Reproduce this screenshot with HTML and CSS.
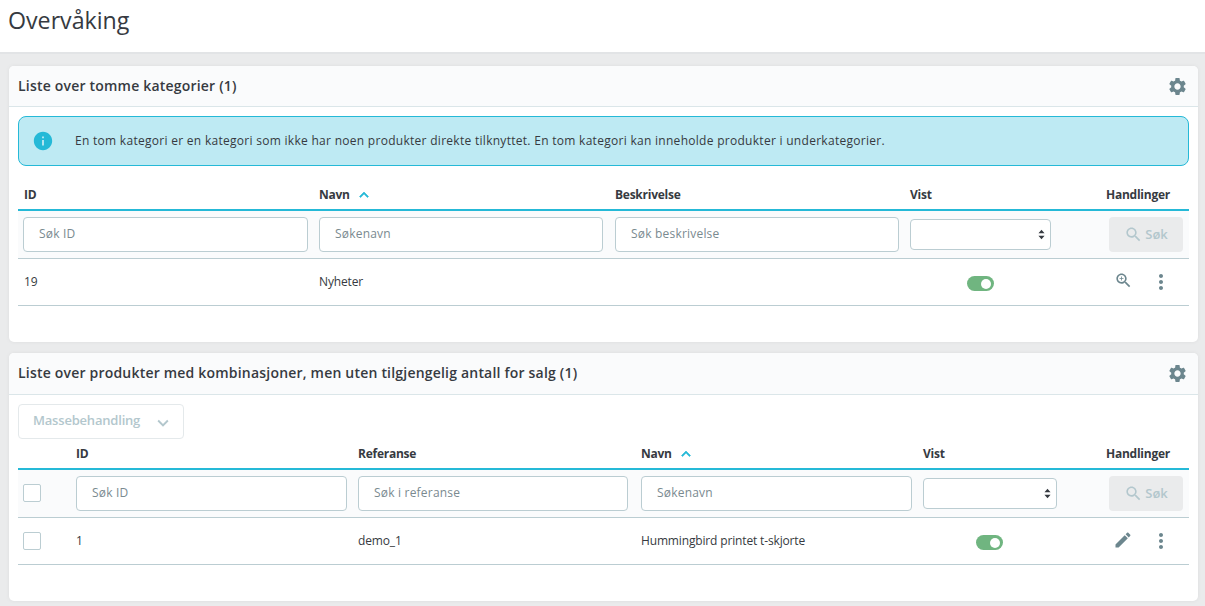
FILE: index.html
```html
<!DOCTYPE html>
<html lang="no">
<head>
    <meta charset="UTF-8">
    <meta name="viewport" content="width=device-width, initial-scale=1.0">
    <title>Overvåking</title>
    <link rel="stylesheet" href="styles.css">
</head>
<body>
    <header class="page-head">
        <h1>Overvåking</h1>
    </header>

    <main class="content">
        <section class="card">
            <div class="card-head">
                <h3>Liste over tomme kategorier (1)</h3>
                <svg class="gear" viewBox="0 0 24 24"><path d="M19.14 12.94c.04-.3.06-.61.06-.94 0-.32-.02-.64-.07-.94l2.03-1.58c.18-.14.23-.41.12-.61l-1.92-3.32c-.12-.22-.37-.29-.59-.22l-2.39.96c-.5-.38-1.03-.7-1.62-.94l-.36-2.54c-.04-.24-.24-.41-.48-.41h-3.84c-.24 0-.43.17-.47.41l-.36 2.54c-.59.24-1.13.57-1.62.94l-2.39-.96c-.22-.08-.47 0-.59.22L2.74 8.87c-.12.21-.08.47.12.61l2.03 1.58c-.05.3-.09.63-.09.94s.02.64.07.94l-2.03 1.58c-.18.14-.23.41-.12.61l1.92 3.32c.12.22.37.29.59.22l2.39-.96c.5.38 1.03.7 1.62.94l.36 2.54c.05.24.24.41.48.41h3.84c.24 0 .44-.17.47-.41l.36-2.54c.59-.24 1.13-.56 1.62-.94l2.39.96c.22.08.47 0 .59-.22l1.92-3.32c.12-.22.07-.47-.12-.61l-2.01-1.58zM12 15.6c-1.98 0-3.6-1.62-3.6-3.6s1.62-3.6 3.6-3.6 3.6 1.62 3.6 3.6-1.62 3.6-3.6 3.6z"/></svg>
            </div>
            <div class="card-body">
                <div class="alert">
                    <svg class="alert-icon" viewBox="0 0 24 24"><path d="M12 2C6.48 2 2 6.48 2 12s4.48 10 10 10 10-4.48 10-10S17.52 2 12 2zm1 15h-2v-6h2v6zm0-8h-2V7h2v2z"/></svg>
                    <p>En tom kategori er en kategori som ikke har noen produkter direkte tilknyttet. En tom kategori kan inneholde produkter i underkategorier.</p>
                </div>
                <table class="grid grid-categories">
                    <colgroup>
                        <col class="c-a"><col class="c-b"><col class="c-c"><col class="c-d"><col>
                    </colgroup>
                    <thead>
                        <tr class="titles">
                            <th>ID</th>
                            <th>Navn <svg class="sort" viewBox="0 0 24 24"><path d="M7.41 15.41L12 10.83l4.59 4.58L18 14l-6-6-6 6z"/></svg></th>
                            <th>Beskrivelse</th>
                            <th>Vist</th>
                            <th class="right">Handlinger</th>
                        </tr>
                        <tr class="filters">
                            <td><input type="text" placeholder="Søk ID"></td>
                            <td class="name-filter"><input type="text" placeholder="Søkenavn"></td>
                            <td><input type="text" placeholder="Søk beskrivelse"></td>
                            <td><div class="select-wrap"><select></select><svg class="updown" viewBox="0 0 8 12"><path d="M4 0.5L7.5 4.5H0.5zM4 11.5L0.5 7.5H7.5z"/></svg></div></td>
                            <td class="right"><button class="search-btn" disabled><svg viewBox="0 0 24 24"><path d="M15.5 14h-.79l-.28-.27C15.41 12.59 16 11.11 16 9.5 16 5.91 13.09 3 9.5 3S3 5.91 3 9.5 5.91 16 9.5 16c1.61 0 3.09-.59 4.23-1.57l.27.28v.79l5 4.99L20.49 19l-4.99-5zm-6 0C7.01 14 5 11.99 5 9.5S7.01 5 9.5 5 14 7.01 14 9.5 11.99 14 9.5 14z"/></svg>Søk</button></td>
                        </tr>
                    </thead>
                    <tbody>
                        <tr>
                            <td class="cell-text">19</td>
                            <td>Nyheter</td>
                            <td></td>
                            <td class="center"><span class="toggle"><span class="knob"></span></span></td>
                            <td>
                                <div class="actions">
                                    <svg class="act act-zoom" viewBox="0 0 24 24"><path d="M15.5 14h-.79l-.28-.27C15.41 12.59 16 11.11 16 9.5 16 5.91 13.09 3 9.5 3S3 5.91 3 9.5 5.91 16 9.5 16c1.61 0 3.09-.59 4.23-1.57l.27.28v.79l5 4.99L20.49 19l-4.99-5zm-6 0C7.01 14 5 11.99 5 9.5S7.01 5 9.5 5 14 7.01 14 9.5 11.99 14 9.5 14z"/><path d="M12 10h-2v2H9v-2H7V9h2V7h1v2h2v1z"/></svg>
                                    <svg class="act" viewBox="0 0 24 24"><path d="M12 8c1.1 0 2-.9 2-2s-.9-2-2-2-2 .9-2 2 .9 2 2 2zm0 2c-1.1 0-2 .9-2 2s.9 2 2 2 2-.9 2-2-.9-2-2-2zm0 6c-1.1 0-2 .9-2 2s.9 2 2 2 2-.9 2-2-.9-2-2-2z"/></svg>
                                </div>
                            </td>
                        </tr>
                    </tbody>
                </table>
            </div>
        </section>

        <section class="card">
            <div class="card-head head-products">
                <h3>Liste over produkter med kombinasjoner, men uten tilgjengelig antall for salg (1)</h3>
                <svg class="gear" viewBox="0 0 24 24"><path d="M19.14 12.94c.04-.3.06-.61.06-.94 0-.32-.02-.64-.07-.94l2.03-1.58c.18-.14.23-.41.12-.61l-1.92-3.32c-.12-.22-.37-.29-.59-.22l-2.39.96c-.5-.38-1.03-.7-1.62-.94l-.36-2.54c-.04-.24-.24-.41-.48-.41h-3.84c-.24 0-.43.17-.47.41l-.36 2.54c-.59.24-1.13.57-1.62.94l-2.39-.96c-.22-.08-.47 0-.59.22L2.74 8.87c-.12.21-.08.47.12.61l2.03 1.58c-.05.3-.09.63-.09.94s.02.64.07.94l-2.03 1.58c-.18.14-.23.41-.12.61l1.92 3.32c.12.22.37.29.59.22l2.39-.96c.5.38 1.03.7 1.62.94l.36 2.54c.05.24.24.41.48.41h3.84c.24 0 .44-.17.47-.41l.36-2.54c.59-.24 1.13-.56 1.62-.94l2.39.96c.22.08.47 0 .59-.22l1.92-3.32c.12-.22.07-.47-.12-.61l-2.01-1.58zM12 15.6c-1.98 0-3.6-1.62-3.6-3.6s1.62-3.6 3.6-3.6 3.6 1.62 3.6 3.6-1.62 3.6-3.6 3.6z"/></svg>
            </div>
            <div class="card-body body-products">
                <button class="bulk" disabled><span class="bulk-label">Massebehandling</span> <svg viewBox="0 0 24 24"><path d="M16.59 8.59L12 13.17 7.41 8.59 6 10l6 6 6-6z"/></svg></button>
                <table class="grid grid-products">
                    <colgroup>
                        <col class="p-a"><col class="p-b"><col class="p-c"><col class="p-d"><col class="p-e"><col>
                    </colgroup>
                    <thead>
                        <tr class="titles">
                            <th></th>
                            <th>ID</th>
                            <th>Referanse</th>
                            <th>Navn <svg class="sort" viewBox="0 0 24 24"><path d="M7.41 15.41L12 10.83l4.59 4.58L18 14l-6-6-6 6z"/></svg></th>
                            <th>Vist</th>
                            <th class="right">Handlinger</th>
                        </tr>
                        <tr class="filters">
                            <td><span class="check"></span></td>
                            <td><input type="text" placeholder="Søk ID"></td>
                            <td class="ref-filter"><input type="text" placeholder="Søk i referanse"></td>
                            <td><input type="text" placeholder="Søkenavn"></td>
                            <td><div class="select-wrap"><select></select><svg class="updown" viewBox="0 0 8 12"><path d="M4 0.5L7.5 4.5H0.5zM4 11.5L0.5 7.5H7.5z"/></svg></div></td>
                            <td class="right"><button class="search-btn" disabled><svg viewBox="0 0 24 24"><path d="M15.5 14h-.79l-.28-.27C15.41 12.59 16 11.11 16 9.5 16 5.91 13.09 3 9.5 3S3 5.91 3 9.5 5.91 16 9.5 16c1.61 0 3.09-.59 4.23-1.57l.27.28v.79l5 4.99L20.49 19l-4.99-5zm-6 0C7.01 14 5 11.99 5 9.5S7.01 5 9.5 5 14 7.01 14 9.5 11.99 14 9.5 14z"/></svg>Søk</button></td>
                        </tr>
                    </thead>
                    <tbody>
                        <tr>
                            <td><span class="check"></span></td>
                            <td>1</td>
                            <td>demo_1</td>
                            <td>Hummingbird printet t-skjorte</td>
                            <td class="center"><span class="toggle"><span class="knob"></span></span></td>
                            <td>
                                <div class="actions">
                                    <svg class="act act-edit" viewBox="0 0 24 24"><path d="M3 17.25V21h3.75L17.81 9.94l-3.75-3.75L3 17.25zM20.71 7.04c.39-.39.39-1.02 0-1.41l-2.34-2.34c-.39-.39-1.02-.39-1.41 0l-1.83 1.83 3.75 3.75 1.83-1.83z"/></svg>
                                    <svg class="act" viewBox="0 0 24 24"><path d="M12 8c1.1 0 2-.9 2-2s-.9-2-2-2-2 .9-2 2 .9 2 2 2zm0 2c-1.1 0-2 .9-2 2s.9 2 2 2 2-.9 2-2-.9-2-2-2zm0 6c-1.1 0-2 .9-2 2s.9 2 2 2 2-.9 2-2-.9-2-2-2z"/></svg>
                                </div>
                            </td>
                        </tr>
                    </tbody>
                </table>
            </div>
        </section>
    </main>
</body>
</html>
```

FILE: styles.css
```css
* {
    box-sizing: border-box;
}
html, body {
    height: 100%;
}
body {
    margin: 0;
    overflow: hidden;
    background: #eaebec;
    color: #363a41;
    font-family: "Open Sans", sans-serif;
    font-size: 12px;
}
.page-head {
    height: 54px;
    padding: 4px 8px 0;
    background: #fff;
    border-bottom: 2px solid #e2e4e6;
}
.page-head h1 {
    margin: 0;
    font-size: 23.2px;
    font-weight: 400;
    line-height: 33px;
}
.content {
    display: flex;
    flex-direction: column;
    gap: 11px;
    padding: 12px 7px 0 9px;
}
.card {
    background: #fff;
    border-radius: 5px;
    box-shadow: 0 0 4px rgba(0, 0, 0, 0.06);
}
.card-head {
    display: flex;
    align-items: center;
    justify-content: space-between;
    height: 41px;
    padding: 0 10px 0 9px;
    background: #fafbfc;
    border-bottom: 1px solid #dbe6e9;
    border-radius: 5px 5px 0 0;
}
.head-products {
    height: 42px;
}
.card-head h3 {
    margin: 0;
    padding-bottom: 2px;
    font-size: 14px;
    font-weight: 600;
    letter-spacing: 0.2px;
}
.gear {
    width: 21px;
    height: 21px;
    fill: #6c868e;
}
.card-body {
    height: 235px;
    padding: 9px 9px 0;
}
.body-products {
    height: 206px;
}
.alert {
    display: flex;
    align-items: center;
    gap: 12px;
    height: 50px;
    padding: 0 15px 0 13px;
    background: #beeaf3;
    border: 1px solid #25b9d7;
    border-radius: 8px;
}
.alert p {
    margin: 0;
    padding-bottom: 1px;
    font-size: 12px;
    letter-spacing: 0.285px;
}
.alert-icon {
    width: 22px;
    height: 22px;
    margin-right: 9px;
    fill: #25b9d7;
}
.grid {
    width: 100%;
    table-layout: fixed;
    border-collapse: collapse;
}
.grid-categories {
    margin-top: 14px;
}
.c-a, .c-b {
    width: 296px;
}
.c-c {
    width: 295px;
}
.c-d {
    width: 152px;
}
.p-a {
    width: 53px;
}
.p-b {
    width: 282px;
}
.p-c {
    width: 283px;
}
.p-d {
    width: 282px;
}
.p-e {
    width: 145px;
}
.titles th {
    height: 30px;
    padding: 0 5px;
    text-align: left;
    font-size: 12px;
    font-weight: 700;
    letter-spacing: -0.25px;
    vertical-align: middle;
    border-bottom: 2px solid #25b9d7;
}
.grid-categories .titles th:first-child,
.grid tbody td.cell-text {
    padding-left: 6px;
}
.titles th.right {
    padding-right: 19px;
    text-align: right;
}
.sort {
    width: 18px;
    height: 18px;
    margin: -5px 0 -5px 2px;
    vertical-align: 0;
    fill: #25b9d7;
    stroke: #25b9d7;
    stroke-width: 0.8;
}
.filters td {
    height: 48px;
    padding: 0 6px 0 5px;
    background: #fafbfc;
    border-bottom: 1px solid #bbcdd2;
}
.filters td.name-filter {
    padding-right: 7px;
}
.filters td.ref-filter {
    padding-right: 8px;
}
.filters input {
    display: block;
    width: 100%;
    height: 35px;
    padding: 0 15px 2px;
    background: #fff;
    border: 1px solid #bbcdd2;
    border-radius: 4px;
    font-family: inherit;
    font-size: 12px;
    letter-spacing: 0.2px;
    color: #363a41;
}
.filters input::placeholder {
    color: #7a8a90;
    opacity: 1;
}
.select-wrap {
    position: relative;
}
.select-wrap select {
    display: block;
    width: 100%;
    height: 31px;
    background: #fff;
    border: 1px solid #bbcdd2;
    border-radius: 4px;
    appearance: none;
}
.updown {
    position: absolute;
    top: 10px;
    right: 6px;
    width: 7px;
    height: 11px;
    fill: #363a41;
    pointer-events: none;
}
.right {
    text-align: right;
}
.center {
    text-align: center;
}
.search-btn {
    display: inline-flex;
    align-items: center;
    justify-content: center;
    gap: 2px;
    width: 74px;
    height: 35px;
    padding: 0;
    background: #eaebec;
    border: 0;
    border-radius: 4px;
    color: #b3c7cd;
    font-family: inherit;
    font-size: 13px;
    font-weight: 600;
}
.search-btn svg {
    width: 19px;
    height: 19px;
    fill: #b3c7cd;
}
.grid tbody td {
    height: 47px;
    padding: 0 5px;
    letter-spacing: -0.15px;
    border-bottom: 1px solid #bbcdd2;
}
.grid-categories tbody td.center {
    padding-right: 6px;
}
.grid-products tbody td.center {
    padding-right: 7px;
}
.toggle {
    display: inline-flex;
    align-items: center;
    justify-content: flex-end;
    width: 27px;
    height: 15px;
    padding: 0 3px;
    vertical-align: -4px;
    background: #70b580;
    border-radius: 8px;
}
.knob {
    width: 10px;
    height: 10px;
    background: #fff;
    border-radius: 50%;
}
.actions {
    display: flex;
    justify-content: flex-end;
    align-items: center;
    gap: 16px;
    padding-right: 11px;
}
.act {
    width: 24px;
    height: 24px;
    fill: #6c868e;
}
.act-zoom {
    width: 19px;
    height: 19px;
    margin-top: -2px;
}
.act-edit {
    width: 20px;
    height: 20px;
    margin-top: -1px;
}
.bulk {
    display: flex;
    align-items: center;
    justify-content: space-between;
    width: 166px;
    height: 35px;
    padding: 0 9px 0 14px;
    background: #fff;
    border: 1px solid #e4e9eb;
    border-radius: 4px;
    color: #b3c7cd;
    font-family: inherit;
    font-size: 13px;
    font-weight: 600;
    letter-spacing: -0.2px;
}
.bulk-label {
    padding-bottom: 4px;
}
.bulk svg {
    width: 22px;
    height: 22px;
    margin-top: 3px;
    fill: #b3c7cd;
}
.check {
    display: block;
    width: 18px;
    height: 18px;
    background: #fff;
    border: 1px solid #bbcdd2;
    border-radius: 2px;
}
```
